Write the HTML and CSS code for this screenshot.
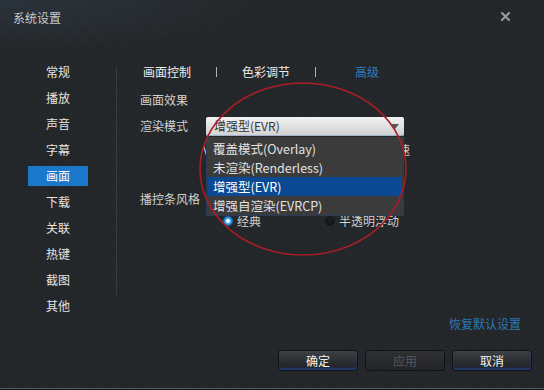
FILE: index.html
```html
<!DOCTYPE html>
<html lang="zh-CN">
<head>
    <meta charset="UTF-8">
    <meta name="viewport" content="width=device-width, initial-scale=1.0">
    <title>系统设置</title>
    <link rel="stylesheet" href="styles.css">
</head>
<body>
    <div class="window">
        <div class="titlebar">
            <span class="title">系统设置</span>
            <svg class="close" width="9" height="9" viewBox="0 0 9 9">
                <path d="M1 1 L8 8 M8 1 L1 8" stroke="#9c9c9c" stroke-width="2" stroke-linecap="square"/>
            </svg>
        </div>

        <div class="main">
            <ul class="nav">
                <li>常规</li>
                <li>播放</li>
                <li>声音</li>
                <li>字幕</li>
                <li class="active">画面</li>
                <li>下载</li>
                <li>关联</li>
                <li>热键</li>
                <li>截图</li>
                <li>其他</li>
            </ul>
            <div class="divider"></div>

            <div class="content">
                <div class="tabs">
                    <span class="tab">画面控制</span>
                    <span class="tab-sep"></span>
                    <span class="tab">色彩调节</span>
                    <span class="tab-sep"></span>
                    <span class="tab tab-active">高级</span>
                </div>

                <div class="section-title">画面效果</div>

                <div class="row">
                    <span class="label">渲染模式</span>
                    <div class="select-wrap">
                        <div class="select">
                            <span>增强型(EVR)</span>
                            <span class="arrow"></span>
                        </div>
                        <ul class="dropdown">
                            <li>覆盖模式(Overlay)</li>
                            <li>未渲染(Renderless)</li>
                            <li class="selected">增强型(EVR)</li>
                            <li>增强自渲染(EVRCP)</li>
                        </ul>
                    </div>
                </div>

                <div class="row hidden-row">
                    <span>V</span>
                    <span>速</span>
                </div>

                <div class="row style-row">
                    <span class="label">播控条风格</span>
                </div>

                <div class="row radios">
                    <label class="radio radio-first"><span class="dot checked"></span>经典</label>
                    <label class="radio"><span class="dot"></span>半透明浮动</label>
                </div>
            </div>
        </div>

        <div class="footer">
            <a class="restore">恢复默认设置</a>
            <div class="buttons">
                <button class="btn">确定</button>
                <button class="btn" disabled>应用</button>
                <button class="btn">取消</button>
            </div>
        </div>

        <!-- red annotation mark -->
        <svg class="mark" width="544" height="390" viewBox="0 0 544 390">
            <ellipse cx="303" cy="169" rx="103" ry="86" fill="none" stroke="#a91d26" stroke-width="1.6"/>
        </svg>
    </div>
</body>
</html>
```

FILE: styles.css
```css
* {
    box-sizing: border-box;
}
body {
    margin: 0;
    background: #232629;
    font-family: "Noto Sans CJK SC", "Liberation Sans", sans-serif;
    font-size: 12px;
}
ul {
    list-style: none;
    margin: 0;
    padding: 0;
}
.window {
    position: relative;
    width: 544px;
    height: 390px;
    overflow: hidden;
    background:
        radial-gradient(ellipse 260px 50px at 0 0, rgba(55, 75, 92, 0.35), transparent),
        repeating-linear-gradient(45deg, rgba(255, 255, 255, 0.018) 0 1px, transparent 1px 3px),
        #232629;
    box-shadow: inset 0 -1px 0 #141618, inset 0 -2px 0 #56595c;
    color: #d8d8d8;
}
.titlebar {
    height: 36px;
    display: flex;
    justify-content: space-between;
    padding: 10px 34px 0 13px;
}
.title {
    line-height: 16px;
    color: #c8ccd0;
}
.close {
    margin-top: 2px;
}
.main {
    display: flex;
    height: 274px;
}
.nav {
    width: 116px;
    padding-top: 26px;
}
.nav li {
    width: 60px;
    height: 20px;
    margin: 0 0 6px 28px;
    line-height: 20px;
    text-align: center;
    color: #e4e4e4;
}
.nav li.active {
    background: #1b77c9;
    color: #fff;
}
.divider {
    width: 1px;
    height: 228px;
    margin-top: 31px;
    background: #383c40;
}
.content {
    flex: 1;
    padding: 28px 0 0 23px;
}
.tabs {
    display: flex;
    align-items: center;
    gap: 25px;
    height: 16px;
    margin-left: 3px;
    line-height: 16px;
}
.tab {
    color: #ececec;
}
.tab-sep {
    width: 1px;
    height: 10px;
    background: #b0b0b0;
}
.tab-active {
    margin-left: 14px;
    color: #2b7fc2;
}
.section-title {
    margin-top: 12px;
    line-height: 16px;
    color: #d0d0d0;
}
.row {
    display: flex;
    align-items: center;
    line-height: 16px;
    color: #d0d0d0;
}
.row:nth-child(3) {
    margin-top: 8px;
    height: 20px;
}
.label {
    width: 66px;
}
.select-wrap {
    position: relative;
}
.select {
    display: flex;
    justify-content: space-between;
    align-items: center;
    width: 198px;
    height: 19px;
    padding: 0 5px 0 8px;
    border-radius: 2px;
    background: linear-gradient(#f2f2f2, #d0d0d0);
    box-shadow: inset 0 -1px 0 #9fb1cc;
    color: #333;
}
.arrow {
    width: 0;
    height: 0;
    border-left: 4px solid transparent;
    border-right: 4px solid transparent;
    border-top: 5px solid #555;
}
.dropdown {
    position: absolute;
    top: 20px;
    left: 0;
    width: 198px;
    padding: 2px 1px 0;
    background: #3b3b3c;
    border: 1px solid #2a3a58;
    border-top: 0;
    z-index: 2;
}
.dropdown li {
    height: 19px;
    line-height: 19px;
    padding-left: 5px;
    font-size: 12.5px;
    color: #e2e2e2;
}
.dropdown li.selected {
    background: #0b4a92;
    color: #fff;
}
.hidden-row {
    justify-content: space-between;
    width: 207px;
    margin: 6px 0 0 63px;
}
.style-row {
    margin-top: 33px;
}
.radios {
    height: 12px;
    margin-top: 8px;
    line-height: 12px;
}
.radio {
    display: flex;
    align-items: center;
    gap: 3px;
}
.radio-first {
    width: 102px;
    margin-left: 82px;
}
.dot {
    width: 12px;
    height: 12px;
    border-radius: 50%;
    background: radial-gradient(circle at 50% 40%, #1d2023, #0d0e10);
    border: 1px solid #2a2d30;
}
.dot.checked {
    background: radial-gradient(circle, #f0f8ff 0 1.5px, #4aaef0 2.5px, #1c68b0 4.5px, #10243a 6px);
    border-color: #16324e;
}
.footer {
    display: flex;
    flex-direction: column;
    align-items: flex-end;
    padding: 6px 12px 0 0;
}
.restore {
    margin-right: 11px;
    line-height: 16px;
    color: #2a78b8;
}
.buttons {
    display: flex;
    gap: 7px;
    margin-top: 18px;
}
.btn {
    width: 80px;
    height: 21px;
    padding: 0;
    border: 1px solid #111315;
    border-radius: 3px;
    background: linear-gradient(#3d4044, #1d1f22);
    box-shadow: inset 0 -2px 2px rgba(40, 80, 190, 0.55);
    font-family: inherit;
    font-size: 12px;
    color: #f2f2f2;
}
.btn:disabled {
    background: linear-gradient(#2f3134, #222427);
    box-shadow: none;
    color: #55585b;
}
.mark {
    position: absolute;
    top: 0;
    left: 0;
    pointer-events: none;
    z-index: 3;
}
```
